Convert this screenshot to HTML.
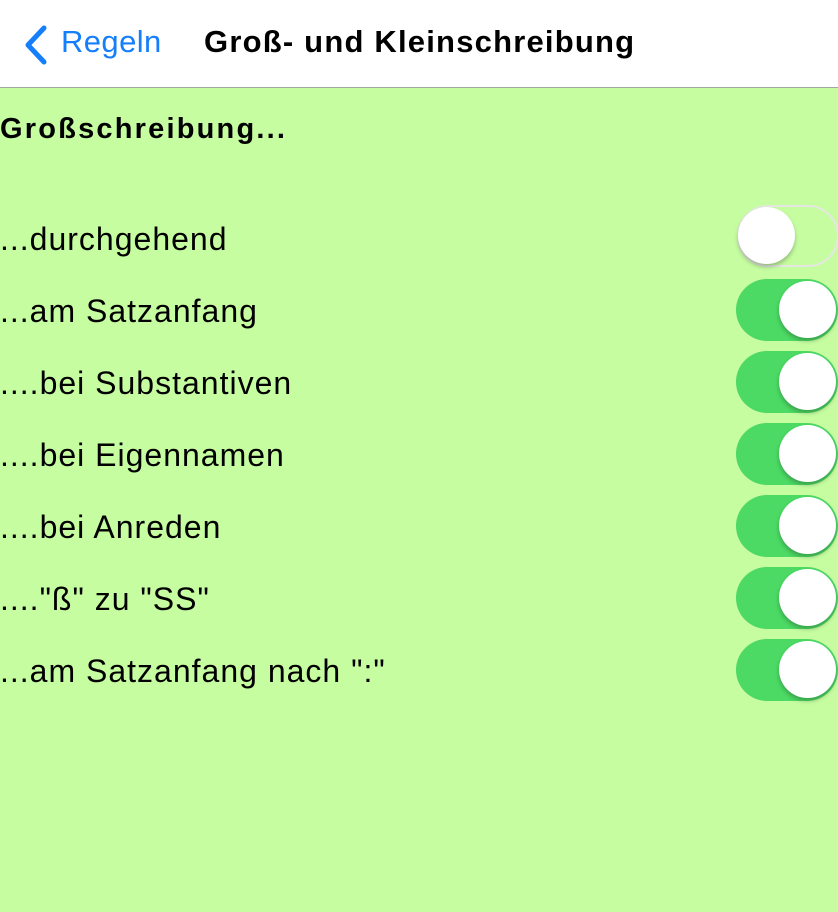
<!DOCTYPE html>
<html><head><meta charset="utf-8"><style>
html,body{margin:0;padding:0}
body{width:838px;height:912px;background:#c6fda1;font-family:"Liberation Sans",sans-serif;position:relative;overflow:hidden}
.nav{position:absolute;left:0;top:0;width:838px;height:87px;background:#fff;border-bottom:1px solid #a0a8a0}
.back{position:absolute;left:61px;top:24px;font-size:31px;letter-spacing:0.4px;color:#147efb}
.title{position:absolute;left:204px;top:24px;font-size:31px;letter-spacing:1.2px;font-weight:bold;color:#000}
.h{position:absolute;left:0;top:113px;font-size:29px;letter-spacing:2.2px;font-weight:bold}
.row{position:absolute;left:0;font-size:32px;letter-spacing:1px;color:#000}
.tg{position:absolute;left:736px;width:102px;height:62px;border-radius:31px;background:#4cd964}
.tg .k{position:absolute;top:2px;right:2px;width:57px;height:57px;border-radius:50%;background:#fff;box-shadow:0 3px 4px rgba(0,0,0,.25)}
.tg.off{background:transparent;box-shadow:inset 0 0 0 2px #e4e8e0;left:737px}
.tg.off .k{left:1px;right:auto}
</style></head><body>
<div class="nav">
<svg style="position:absolute;left:22px;top:25px" width="26" height="40" viewBox="0 0 26 40"><path d="M22 3 L6 20 L22 37" stroke="#147efb" stroke-width="5" fill="none" stroke-linecap="round" stroke-linejoin="round"/></svg>
<div class="back">Regeln</div>
<div class="title">Groß- und Kleinschreibung</div>
</div>
<div class="h">Großschreibung...</div>
<div class="row" style="top:221px">...durchgehend</div>
<div class="row" style="top:293px">...am Satzanfang</div>
<div class="row" style="top:365px">....bei Substantiven</div>
<div class="row" style="top:437px">....bei Eigennamen</div>
<div class="row" style="top:509px">....bei Anreden</div>
<div class="row" style="top:581px">...."ß" zu "SS"</div>
<div class="row" style="top:653px">...am Satzanfang nach ":"</div>
<div class="tg off" style="top:205px"><div class="k"></div></div>
<div class="tg" style="top:279px"><div class="k"></div></div>
<div class="tg" style="top:351px"><div class="k"></div></div>
<div class="tg" style="top:423px"><div class="k"></div></div>
<div class="tg" style="top:495px"><div class="k"></div></div>
<div class="tg" style="top:567px"><div class="k"></div></div>
<div class="tg" style="top:639px"><div class="k"></div></div>
</body></html>
